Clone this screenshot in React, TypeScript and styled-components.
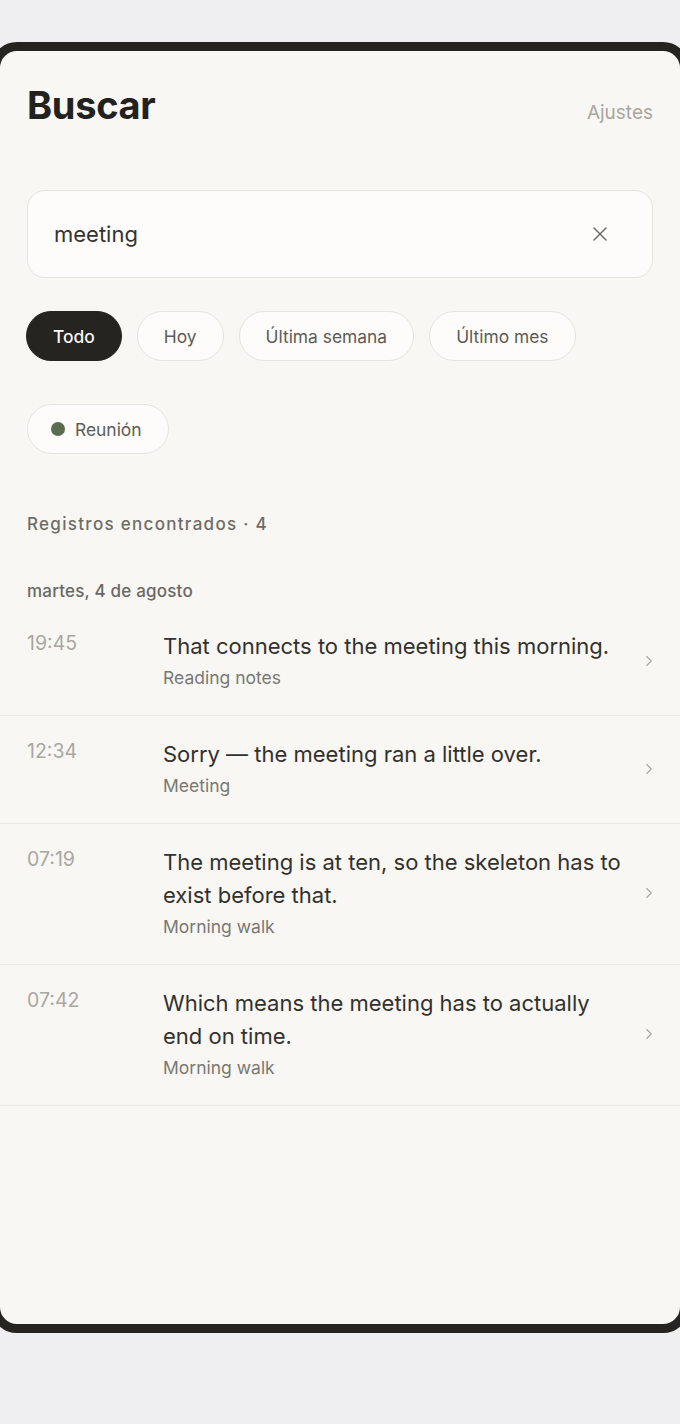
import React from 'react';
import styled, { createGlobalStyle } from 'styled-components';
import { ChevronRight, X } from 'lucide-react';

const GlobalStyle = createGlobalStyle`
  html, body {
    margin: 0;
    padding: 0;
    background: #efeef0;
  }
  body {
    font-family: Inter, "Noto Sans", sans-serif;
    overflow-x: hidden;
  }
`;

type Entry = {
  time: string
  text: string
  source: string
};

const entries: Entry[] = [
  { time: '19:45', text: 'That connects to the meeting this morning.', source: 'Reading notes' },
  { time: '12:34', text: 'Sorry — the meeting ran a little over.', source: 'Meeting' },
  { time: '07:19', text: 'The meeting is at ten, so the skeleton has to exist before that.', source: 'Morning walk' },
  { time: '07:42', text: 'Which means the meeting has to actually end on time.', source: 'Morning walk' },
];

const ranges = ['Todo', 'Hoy', 'Última semana', 'Último mes'];

export default function App() {
  return (
    <>
      <GlobalStyle />
      <Page>
        <Device>
          <Header>
            <Title>Buscar</Title>
            <Settings>Ajustes</Settings>
          </Header>

          <SearchBox>
            <SearchText>meeting</SearchText>
            <ClearButton>
              <X size={24} strokeWidth={1.4} />
            </ClearButton>
          </SearchBox>

          <ChipRow>
            {ranges.map((r, i) => (
              <Chip key={r} active={i === 0}>{r}</Chip>
            ))}
          </ChipRow>

          <TagRow>
            <Chip>
              <Dot />
              Reunión
            </Chip>
          </TagRow>

          <Count>Registros encontrados · 4</Count>
          <DayLabel>martes, 4 de agosto</DayLabel>

          <List>
            {entries.map((e) => (
              <Row key={e.time}>
                <Time>{e.time}</Time>
                <Body>
                  <EntryText>{e.text}</EntryText>
                  <Source>{e.source}</Source>
                </Body>
                <Chevron>
                  <ChevronRight size={18} strokeWidth={1.5} />
                </Chevron>
              </Row>
            ))}
          </List>
        </Device>
      </Page>
    </>
  );
}

const Page = styled.div`
  min-height: 1424px;
  padding-top: 42px;
  box-sizing: border-box;
`;

const Device = styled.div`
  margin-left: -9px;
  width: calc(100% + 18px);
  height: 1291px;
  box-sizing: border-box;
  border: 9px solid #262420;
  border-radius: 26px;
  background: #f8f7f3;
  overflow: hidden;
`;

const Header = styled.div`
  display: flex;
  justify-content: space-between;
  align-items: baseline;
  padding: 32px 27px 0 27px;
`;

const Title = styled.h1`
  margin: 0;
  font-size: 38px;
  line-height: 44px;
  font-weight: 700;
  color: #23211e;
  letter-spacing: -0.3px;
`;

const Settings = styled.span`
  font-size: 19px;
  color: #a9a7a1;
`;

const SearchBox = styled.div`
  margin: 63px 27px 0 27px;
  height: 88px;
  box-sizing: border-box;
  display: flex;
  align-items: center;
  justify-content: space-between;
  padding: 0 40px 0 26px;
  background: #fdfcfa;
  border: 1.5px solid #e6e4de;
  border-radius: 18px;
`;

const SearchText = styled.span`
  font-size: 22px;
  color: #35332f;
`;

const ClearButton = styled.span`
  display: flex;
  color: #6b6965;
`;

const ChipRow = styled.div`
  display: flex;
  gap: 15px;
  margin: 33px 26px 0 26px;
`;

const TagRow = styled.div`
  display: flex;
  margin: 43px 27px 0 27px;
`;

const Chip = styled.span<{ active?: boolean }>`
  display: inline-flex;
  align-items: center;
  gap: 10px;
  height: 50px;
  box-sizing: border-box;
  padding: 0 26px;
  border-radius: 25px;
  font-size: 17.4px;
  border: 1.5px solid ${(p) => (p.active ? '#262420' : '#e6e4de')};
  background: ${(p) => (p.active ? '#262420' : '#fdfcfa')};
  color: ${(p) => (p.active ? '#f8f7f3' : '#5d5b57')};
  font-weight: ${(p) => (p.active ? 500 : 400)};
`;

const Dot = styled.span`
  width: 14px;
  height: 14px;
  border-radius: 50%;
  background: #5b6b4e;
  margin-left: -3px;
`;

const Count = styled.div`
  margin: 58px 27px 0 27px;
  font-size: 17px;
  line-height: 24px;
  font-weight: 500;
  letter-spacing: 1.3px;
  color: #6e6c67;
`;

const DayLabel = styled.div`
  margin: 43px 27px 0 27px;
  font-size: 17px;
  line-height: 24px;
  font-weight: 500;
  letter-spacing: 0.2px;
  color: #6a6864;
`;

const List = styled.div`
  margin-top: 5px;
`;

const Row = styled.div`
  display: grid;
  grid-template-columns: 136px 1fr 29px;
  padding: 22px 26px 24px 27px;
  border-bottom: 1px solid #ebe9e4;
`;

const Time = styled.div`
  font-size: 19.5px;
  line-height: 26px;
  color: #a9a7a1;
`;

const Body = styled.div`
  display: flex;
  flex-direction: column;
  gap: 2px;
`;

const EntryText = styled.div`
  font-size: 22px;
  line-height: 33px;
  color: #33312d;
`;

const Source = styled.div`
  font-size: 17.5px;
  line-height: 26px;
  color: #7a7873;
`;

const Chevron = styled.div`
  display: flex;
  align-items: center;
  justify-content: flex-end;
  margin-right: -4px;
  color: #a9a7a1;
`;
